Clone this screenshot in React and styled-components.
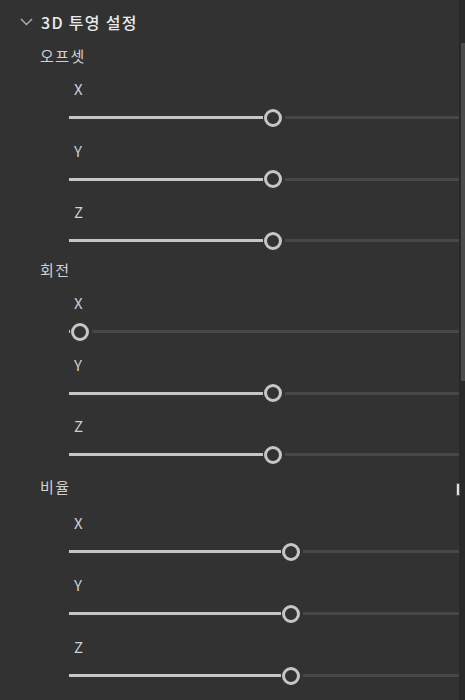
import React from "react";
import styled, { createGlobalStyle } from "styled-components";

const Global = createGlobalStyle`
  html, body { margin: 0; padding: 0; background: #323232; }
  body { font-family: "Noto Sans CJK KR", "Noto Sans", sans-serif; }
`;

const Panel = styled.div`
  display: flex;
  width: 465px;
  height: 700px;
  overflow: hidden;
  background: #323232;
  position: relative;
`;

const Content = styled.div`
  flex: 1;
  display: flex;
  flex-direction: column;
`;

const Scrollbar = styled.div`
  width: 6px;
  background: #292929;
  display: flex;
  flex-direction: column;
  align-items: flex-end;
`;

const ScrollThumb = styled.div`
  margin-top: 43px;
  width: 4px;
  height: 338px;
  background: #4b4b4b;
`;

const Header = styled.div`
  height: 44px;
  display: flex;
  align-items: center;
  padding-left: 20px;
  gap: 8px;
  color: #ececec;
  font-size: 16px;
  font-weight: 500;
  letter-spacing: 1.3px;
`;

const Group = styled.div`
  display: flex;
  flex-direction: column;
  padding-top: ${(p) => p.$top || 0}px;
`;

const GroupTitle = styled.div`
  height: 24px;
  line-height: 24px;
  padding-left: 40px;
  margin-bottom: ${(p) => p.$gap}px;
  color: #d2d2d2;
  font-size: 15px;
  letter-spacing: 1.5px;
`;

const Row = styled.div`
  display: flex;
  flex-direction: column;
  padding-bottom: ${(p) => p.$pad}px;
  &:last-child { padding-bottom: 0; }
`;

const AxisLabel = styled.div`
  height: 24px;
  line-height: 24px;
  padding-left: 74px;
  color: #d0d0d0;
  font-size: 15px;
`;

const SliderWrap = styled.div`
  height: 34px;
  display: flex;
  align-items: center;
  padding-left: 69px;
`;

const Track = styled.div`
  position: relative;
  flex: 1;
  height: 20px;
`;

const Fill = styled.div`
  position: absolute;
  left: 0;
  top: 8px;
  height: 3px;
  background: #c6c6c6;
`;

const Rest = styled.div`
  position: absolute;
  right: 0;
  top: 8px;
  height: 3px;
  background: #474747;
`;

const Thumb = styled.div`
  position: absolute;
  top: 0.5px;
  width: 18px;
  height: 18px;
  box-sizing: border-box;
  border-radius: 50%;
  border: 3px solid #c6c6c6;
  transform: translateX(-50%);
`;

const Caret = styled.div`
  position: absolute;
  left: 457px;
  top: 484px;
  width: 2px;
  height: 11px;
  background: #e0e0e0;
  box-shadow: 0 0 0 1px #555;
`;

const TRACK_W = 390;

function Slider({ value }) {
  const center = 11 + value * (TRACK_W - 22);
  return (
    <SliderWrap>
      <Track>
        <Fill style={{ width: Math.max(0, center - 10) }} />
        <Rest style={{ left: center + 12 }} />
        <Thumb style={{ left: center }} />
      </Track>
    </SliderWrap>
  );
}

const Chevron = () => (
  <svg width="13" height="8" viewBox="0 0 13 8" fill="none">
    <path d="M1 1 L6.5 6.5 L12 1" stroke="#b0b0b0" strokeWidth="1.4" />
  </svg>
);

const groups = [
  { title: "오프셋", top: 0, gap: 9, pad: 3.5, values: [0.525, 0.525, 0.525] },
  { title: "회전", top: 0, gap: 9, pad: 3.5, values: [0, 0.525, 0.525] },
  { title: "비율", top: 3, gap: 12, pad: 4, values: [0.573, 0.573, 0.573] },
];

export default function App() {
  return (
    <>
      <Global />
      <Panel>
        <Content>
          <Header>
            <Chevron />
            <span>3D 투영 설정</span>
          </Header>
          {groups.map((g) => (
            <Group key={g.title} $top={g.top}>
              <GroupTitle $gap={g.gap}>{g.title}</GroupTitle>
              {["X", "Y", "Z"].map((axis, i) => (
                <Row key={axis} $pad={g.pad}>
                  <AxisLabel>{axis}</AxisLabel>
                  <Slider value={g.values[i]} />
                </Row>
              ))}
            </Group>
          ))}
        </Content>
        <Scrollbar>
          <ScrollThumb />
        </Scrollbar>
        <Caret />
      </Panel>
    </>
  );
}
